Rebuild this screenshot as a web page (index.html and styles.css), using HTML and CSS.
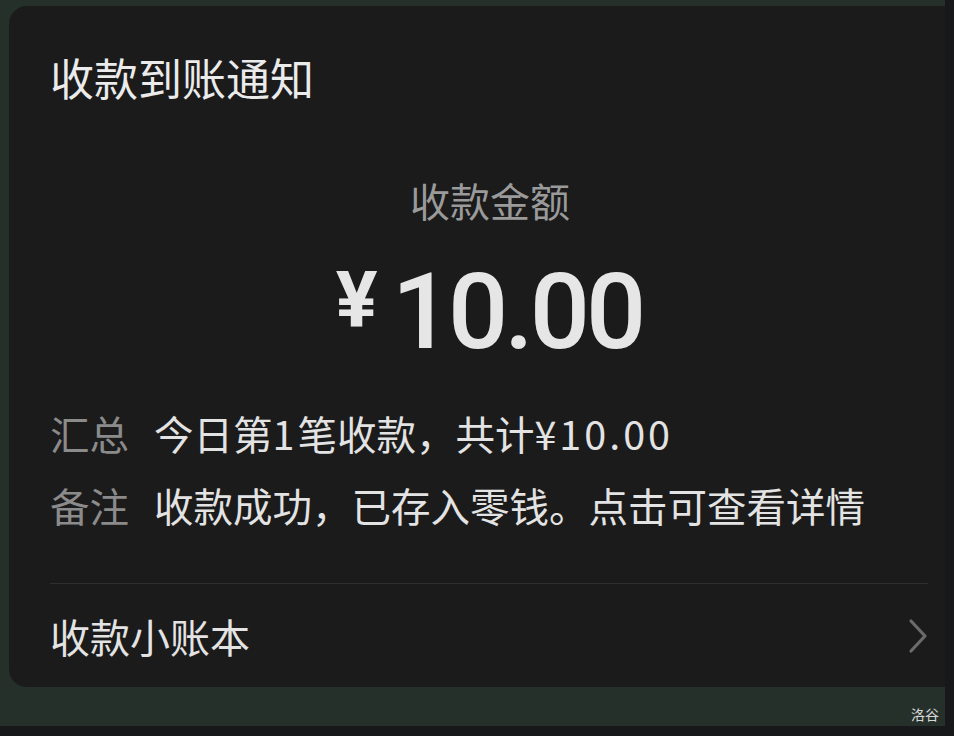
FILE: index.html
```html
<!DOCTYPE html>
<html lang="zh-CN">
<head>
<meta charset="utf-8">
<title>收款到账通知</title>
<link rel="stylesheet" href="styles.css">
</head>
<body>
<div class="screen">
  <div class="card">
    <div class="title">收款到账通知</div>
    <div class="amount-label">收款金额</div>
    <div class="amount">
      <span class="yen">¥</span>
      <span class="num">10.00</span>
    </div>
    <div class="rows">
      <div class="row"><span class="label">汇总</span><span class="value">今日第<span class="latin">1</span>笔收款，共计<span class="latin">¥10.00</span></span></div>
      <div class="row"><span class="label">备注</span><span class="value">收款成功，已存入零钱。点击可查看详情</span></div>
    </div>
    <div class="divider"></div>
    <div class="footer">
      <span class="footer-text">收款小账本</span>
      <svg class="chevron" width="20" height="36" viewBox="0 0 20 36"><path d="M3 3 L17 18 L3 33" fill="none" stroke="#6b6b6d" stroke-width="3.2" stroke-linecap="round" stroke-linejoin="round"/></svg>
    </div>
  </div>
  <div class="watermark">洛谷</div>
</div>
</body>
</html>
```
FILE: styles.css
```css
html, body {
  margin: 0;
  padding: 0;
}
body {
  width: 954px;
  height: 736px;
  background: #16181a;
  overflow: hidden;
  font-family: "Noto Sans CJK SC", "Noto Sans", sans-serif;
}
.screen {
  position: relative;
  width: 945px;
  height: 726px;
  background: #25302a;
  overflow: hidden;
  padding: 6px 0 0 9px;
  box-sizing: border-box;
}
.card {
  width: 958px;
  height: 681px;
  background: #1b1b1c;
  border-radius: 18px;
  box-sizing: border-box;
  padding: 41px 39px 0 41px;
  display: flex;
  flex-direction: column;
}
.title {
  font-size: 44px;
  line-height: 60px;
  color: #ebebeb;
}
.amount-label {
  margin-top: 68px;
  font-size: 40px;
  line-height: 50px;
  color: #9a9a9a;
  text-align: center;
  padding-left: 2px;
}
.amount {
  margin-top: 27px;
  height: 120px;
  display: flex;
  justify-content: center;
  align-items: flex-start;
  gap: 14px;
  color: #e6e6e6;
  padding-right: 0;
}
.yen {
  font-family: "Roboto", "Liberation Sans", sans-serif;
  font-weight: 700;
  font-size: 78px;
  line-height: 78px;
  margin-top: 10px;
}
.num {
  font-family: "Roboto", "Liberation Sans", sans-serif;
  font-weight: 500;
  font-size: 106px;
  line-height: 120px;
  letter-spacing: -4px;
}
.rows {
  margin-top: 25px;
  display: flex;
  flex-direction: column;
}
.row {
  display: flex;
  align-items: center;
  height: 72px;
  font-size: 39.5px;
  line-height: 72px;
}
.label {
  color: #8b8b8b;
  width: 104px;
}
.value {
  color: #e3e3e3;
}
.latin {
  letter-spacing: 3px;
}
.divider {
  margin-top: 42px;
  height: 1px;
  background: #2f2f30;
}
.footer {
  flex: 1;
  display: flex;
  align-items: center;
  justify-content: space-between;
}
.footer-text {
  font-size: 40px;
  color: #e3e3e3;
}
.chevron {
  display: block;
}
.watermark {
  position: absolute;
  right: 6px;
  bottom: 2px;
  font-size: 14px;
  line-height: 20px;
  color: #d6d6d6;
}
```
